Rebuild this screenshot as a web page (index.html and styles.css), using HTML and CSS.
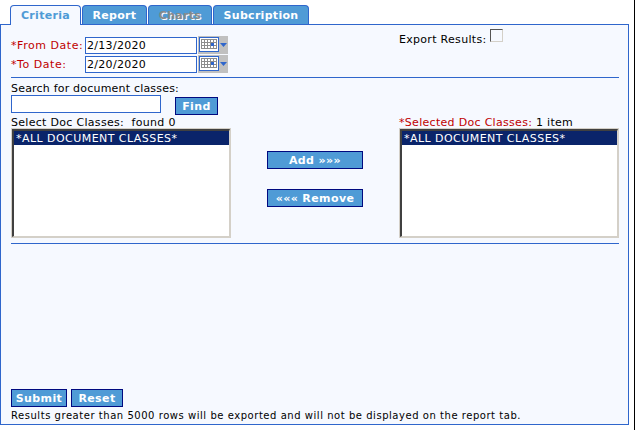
FILE: index.html
```html
<!doctype html>
<html lang="en">
  <head>
    <meta charset="UTF-8" />
    <title>Criteria</title>
    <link rel="stylesheet" href="styles.css">
  </head>
  <body>
    <div class="page">
      <div class="tabs">
        <a class="tab active" style="width: 71px">Criteria</a>
        <a class="tab" style="width: 65px">Report</a>
        <a class="tab disabled" style="width: 64px">Charts</a>
        <a class="tab" style="width: 96px">Subcription</a>
      </div>

      <div class="panel">
        <div class="top-row">
          <div class="dates">
            <div class="date-row">
              <label class="req">*From Date:</label>
              <input class="text date" type="text" value="2/13/2020" />
              <svg class="cal" width="30" height="18" viewBox="0 0 30 18"><use href="#cal-icon" /></svg>
            </div>
            <div class="date-row">
              <label class="req">*To Date:</label>
              <input class="text date" type="text" value="2/20/2020" />
              <svg class="cal" width="30" height="18" viewBox="0 0 30 18"><use href="#cal-icon" /></svg>
            </div>
          </div>
          <div class="export">
            <span>Export Results:</span>
            <input class="check" type="checkbox" />
          </div>
        </div>

        <hr />

        <div class="search-label">Search for document classes:</div>
        <div class="search-row">
          <input class="text search" type="text" />
          <button class="btn find">Find</button>
        </div>

        <div class="lists">
          <div class="list-col">
            <div class="list-label">Select Doc Classes:&nbsp; found 0</div>
            <div class="listbox">
              <div class="listbox-inner">
                <div class="option">*ALL DOCUMENT CLASSES*</div>
              </div>
            </div>
          </div>
          <div class="move-col">
            <button class="btn move">Add »»»</button>
            <button class="btn move">««« Remove</button>
          </div>
          <div class="list-col">
            <div class="list-label"><span class="req">*Selected Doc Classes:</span> 1 item</div>
            <div class="listbox">
              <div class="listbox-inner">
                <div class="option">*ALL DOCUMENT CLASSES*</div>
              </div>
            </div>
          </div>
        </div>

        <hr class="hr-low" />

        <div class="footer">
          <div class="actions">
            <button class="btn submit">Submit</button>
            <button class="btn reset">Reset</button>
          </div>
          <div class="note">Results greater than 5000 rows will be exported and will not be displayed on the report tab.</div>
        </div>
      </div>
    </div>

    <svg width="0" height="0" class="defs">
      <symbol id="cal-icon" viewBox="0 0 30 18">
        <rect width="30" height="18" fill="#c0c0c0" />
        <rect x="1.5" y="1.5" width="19" height="14" fill="#fff" stroke="#2f66cc" />
        <path d="M3 3.5h16M3 6.5h16M3 9.5h16M3 12.5h16M3.5 3v10M6.5 3v10M9.5 3v10M12.5 3v10M15.5 3v10M18.5 3v10" stroke="#8c8c8c" fill="none" />
        <rect x="13" y="7" width="3" height="3" fill="#2f66cc" />
        <path d="M22 7h7l-3.5 4z" fill="#2f66cc" />
      </symbol>
    </svg>
  </body>
</html>
```

FILE: styles.css
```css
body {
  margin: 0;
  background-color: white;
  font-family: "DejaVu Sans", Verdana, sans-serif;
  font-size: 11px;
  color: #000;
}

.page {
  width: 635px;
  height: 430px;
  box-sizing: border-box;
  padding-top: 5px;
  border-right: 1px solid #000;
}

.defs {
  position: absolute;
}

/* Tabs */
.tabs {
  display: flex;
  gap: 1px;
  padding-left: 10px;
  height: 19px;
}

.tab {
  box-sizing: border-box;
  height: 19px;
  border: 1px solid #2f66cc;
  border-bottom: none;
  border-radius: 4px 4px 0 0;
  background-color: #4f9bd6;
  color: white;
  font-weight: bold;
  font-size: 11px;
  line-height: 19px;
  letter-spacing: 0.3px;
  text-align: center;
}

.tab.active {
  height: 20px;
  position: relative;
  z-index: 1;
  background-color: #f6f9ff;
  color: #4f9bd6;
}

.tab.disabled {
  color: #8a8a8a;
  text-shadow: 1px 1px 0 #fff;
}

/* Main panel */
.panel {
  box-sizing: border-box;
  width: 629px;
  height: 401px;
  display: flex;
  flex-direction: column;
  padding: 11px 9px 1px 10px;
  border: 1px solid #2f66cc;
  background-color: #f6f9ff;
  letter-spacing: 0.3px;
}

.req {
  color: #c00000;
}

.top-row {
  display: flex;
  justify-content: space-between;
  height: 41px;
}

.date-row {
  display: flex;
  align-items: center;
  height: 18px;
  margin-bottom: 1px;
}

.date-row label {
  width: 74px;
  letter-spacing: 0.55px;
}

.cal {
  display: block;
  margin-left: 1px;
}

.text {
  box-sizing: border-box;
  border: 1px solid #2f66cc;
  background-color: white;
  padding: 0 1px;
  font-family: inherit;
  font-size: 11px;
  letter-spacing: 0.3px;
  color: #000;
  outline: none;
}

.date {
  width: 112px;
  height: 17px;
}

.export {
  display: flex;
  align-items: flex-start;
  gap: 4px;
  width: 220px;
  margin-top: -7px;
}

.export span {
  margin-top: 4px;
}

.check {
  appearance: none;
  box-sizing: border-box;
  width: 13px;
  height: 13px;
  margin: 0;
  border: 1px solid;
  border-color: #555 #d4d0c8 #d4d0c8 #555;
  background-color: #f6f9ff;
}

hr {
  width: 100%;
  height: 1px;
  margin: 0;
  border: none;
  background-color: #2f66cc;
}

.search-label {
  margin-top: 5px;
  line-height: 12px;
  letter-spacing: 0.2px;
}

.search-row {
  display: flex;
  align-items: flex-start;
  gap: 14px;
}

.search {
  width: 150px;
  height: 18px;
}

.btn {
  box-sizing: border-box;
  height: 18px;
  padding: 0;
  border: 1px solid #000a80;
  background-color: #4f9bd6;
  color: white;
  font-family: inherit;
  font-size: 11px;
  font-weight: bold;
  letter-spacing: 0.4px;
  cursor: pointer;
}

.find {
  width: 43px;
  margin-top: 2px;
}

/* Doc class lists */
.lists {
  display: flex;
  margin-top: 1px;
}

.list-col {
  width: 220px;
}

.list-label {
  height: 12px;
  line-height: 14px;
}

.listbox {
  box-sizing: border-box;
  width: 100%;
  height: 110px;
  border: 1px solid #d4d0c8;
}

.listbox-inner {
  box-sizing: border-box;
  height: 100%;
  border: 1px solid #d4d0c8;
  border-top: 2px solid #404040;
  border-left: 2px solid #404040;
  background-color: white;
}

.option {
  height: 14px;
  padding-left: 2px;
  background-color: #0a246a;
  color: white;
  line-height: 16px;
  letter-spacing: 0.45px;
}

.move-col {
  width: 168px;
  display: flex;
  flex-direction: column;
  align-items: center;
  gap: 20px;
  padding-top: 35px;
}

.move {
  width: 96px;
}

.hr-low {
  margin-top: 5px;
}

.footer {
  margin-top: auto;
}

.actions {
  display: flex;
  gap: 4px;
}

.submit {
  width: 56px;
}

.reset {
  width: 52px;
}

.note {
  margin-top: 2px;
  line-height: 14px;
  font-size: 10px;
  letter-spacing: 0.54px;
}
```
